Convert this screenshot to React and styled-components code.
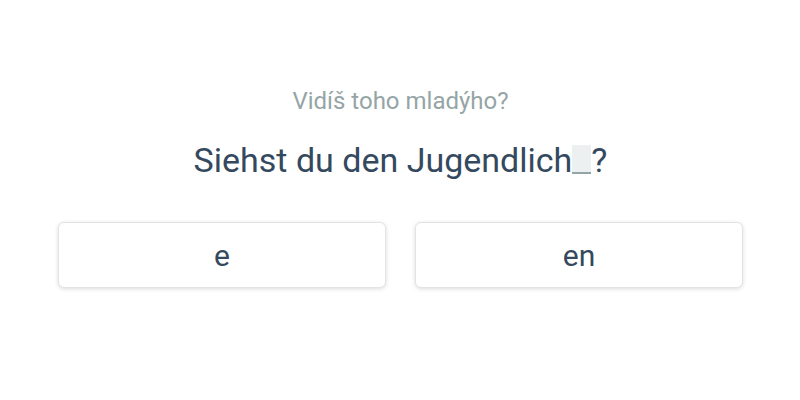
import React from "react";
import styled, { createGlobalStyle } from "styled-components";

const Global = createGlobalStyle`
  html, body { margin: 0; padding: 0; background: #fff; }
  body { font-family: Roboto, "Noto Sans", sans-serif; }
`;

const Page = styled.div`
  width: 800px;
  height: 400px;
  box-sizing: border-box;
  padding: 86px 57px 0 58px;
  display: flex;
  flex-direction: column;
  align-items: center;
`;

const Prompt = styled.div`
  font-size: 24px;
  line-height: 30px;
  color: #95a5a6;
`;

const Question = styled.div`
  margin-top: 24px;
  font-size: 34px;
  line-height: 40px;
  color: #34495e;
`;

const Blank = styled.span`
  display: inline-block;
  width: 19px;
  height: 27px;
  vertical-align: -2px;
  background: #ecf0f1;
  border-bottom: 2px solid #95a5a6;
`;

const Options = styled.div`
  margin-top: 42px;
  align-self: stretch;
  display: grid;
  grid-template-columns: 1fr 1fr;
  gap: 29px;
`;

const Option = styled.button`
  height: 66px;
  background: #fff;
  border: 1px solid #e1e4e6;
  border-radius: 6px;
  box-shadow: 0 1px 4px rgba(0, 0, 0, 0.14);
  font-family: Roboto, "Noto Sans", sans-serif;
  font-size: 30px;
  color: #34495e;
  cursor: pointer;
  padding: 0;
`;

export default function App() {
  return (
    <>
      <Global />
      <Page>
        <Prompt>Vidíš toho mladýho?</Prompt>
        <Question>
          Siehst du den Jugendlich<Blank />?
        </Question>
        <Options>
          <Option>e</Option>
          <Option>en</Option>
        </Options>
      </Page>
    </>
  );
}
